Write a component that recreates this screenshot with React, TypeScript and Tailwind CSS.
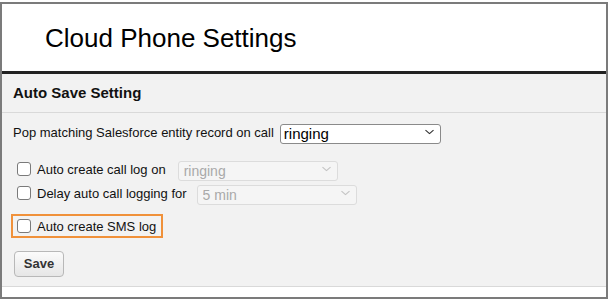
import { ReactNode } from 'react'

const font = { fontFamily: '"Liberation Sans", Arial, sans-serif' }

function Chevron({ color }: { color: string }) {
  return (
    <svg width="9" height="5" viewBox="0 0 9 5" fill="none" className="pointer-events-none absolute right-[7px] top-1/2 -translate-y-1/2">
      <path d="M0.8 0.8 L4.5 4.2 L8.2 0.8" stroke={color} strokeWidth="1.1" strokeLinecap="round" strokeLinejoin="round" />
    </svg>
  )
}

function Select({ value, width, disabled }: { value: string; width: string; disabled?: boolean }) {
  return (
    <div className={`relative ${width} h-[20px]`}>
      <select
        disabled={disabled}
        defaultValue={value}
        className={
          disabled
            ? 'w-full h-full appearance-none rounded-[3px] border border-[#dcdcdc] bg-[#f5f5f5] pl-[5px] text-[14px] leading-[18px] text-[#a9a9a9]'
            : 'w-full h-full appearance-none rounded-[3px] border border-[#8a8a8a] bg-white pl-[3px] text-[15px] leading-[18px] text-black'
        }
        style={font}
      >
        <option>{value}</option>
      </select>
      <Chevron color={disabled ? '#c4c4c4' : '#333'} />
    </div>
  )
}

function Box() {
  return (
    <input
      type="checkbox"
      className="appearance-none w-[14px] h-[14px] shrink-0 rounded-[3px] border border-[#7a7a7a] bg-white"
    />
  )
}

function CheckRow({ label, children }: { label: string; children?: ReactNode }) {
  return (
    <label className="flex items-center h-[20px] ml-[4px]">
      <Box />
      <span className="ml-[6px] text-[13px] leading-[20px] pt-[1px] text-[#111]">{label}</span>
      {children}
    </label>
  )
}

export default function App() {
  return (
    <div className="w-[609px] h-[303px] bg-white pt-[2px]" style={font}>
      <div className="w-[608px] border-2 border-[#7b7b7b] flex flex-col">
        {/* title */}
        <div className="h-[67px] flex items-center pl-[43px] pt-[2px] bg-white">
          <h1 className="text-[26px] text-black">Cloud Phone Settings</h1>
        </div>
        <div className="h-[3px] bg-[#222]" />

        {/* panel */}
        <div className="bg-[#f2f2f2]">
          <div className="h-[39px] flex items-center pl-[11px] border-b border-[#d9d9d9]">
            <h2 className="text-[15px] font-bold text-[#111]">Auto Save Setting</h2>
          </div>

          <div className="pl-[11px] pt-[9px] pb-[9px] flex flex-col">
            <div className="flex items-center h-[20px]">
              <span className="text-[13px] leading-[20px] pt-[1px] text-[#111] mr-[6px]">Pop matching Salesforce entity record on call</span>
              <Select value="ringing" width="w-[161px]" />
            </div>

            <div className="mt-[17px]">
              <CheckRow label="Auto create call log on">
                <div className="ml-[12px]">
                  <Select value="ringing" width="w-[160px]" disabled />
                </div>
              </CheckRow>
            </div>
            <div className="mt-[4px]">
              <CheckRow label="Delay auto call logging for">
                <div className="ml-[10px]">
                  <Select value="5 min" width="w-[160px]" disabled />
                </div>
              </CheckRow>
            </div>

            <div className="mt-[11px] -ml-[2px] w-[152px] h-[24px] border-2 border-[#f0913a] flex items-center pl-[4px]">
              <label className="flex items-center">
                <Box />
                <span className="ml-[6px] text-[13px] leading-[20px] pt-[1px] text-[#111]">Auto create SMS log</span>
              </label>
            </div>

            <button className="mt-[13px] ml-[1px] w-[50px] h-[26px] rounded-[4px] border border-[#b8b8b8] bg-gradient-to-b from-[#fbfbfb] to-[#e6e6e6] text-[13px] font-bold text-[#333]">
              Save
            </button>
          </div>
        </div>
        <div className="h-[11px] border-t border-[#d9d9d9] bg-white" />
      </div>
    </div>
  )
}
